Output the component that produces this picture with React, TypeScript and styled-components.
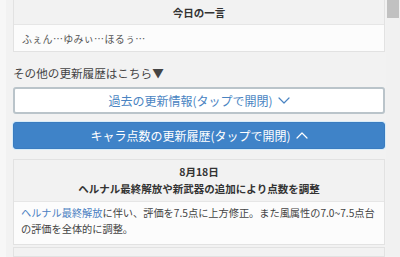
import React from "react";
import styled, { createGlobalStyle } from "styled-components";

const GlobalStyle = createGlobalStyle`
  html, body {
    margin: 0;
    padding: 0;
    overflow: hidden;
    background: #f2f2f2;
  }
  body {
    font-family: "Noto Sans CJK JP", "Noto Sans", sans-serif;
    color: #444;
  }
`;

const Page = styled.div`
  display: flex;
  width: 400px;
  height: 257px;
  overflow: hidden;
  background: #f2f2f2;
  border-left: 6px solid #f7f7f7;
  box-sizing: border-box;
`;

const Main = styled.main`
  flex: 1;
  display: flex;
  flex-direction: column;
  padding: 0 1px 0 7px;
  min-width: 0;
`;

const ScrollTrack = styled.div`
  width: 14px;
  background: #f1f1f1;
  display: flex;
  flex-direction: column;
  align-items: center;
`;

const Thumb = styled.div`
  width: 12px;
  height: 18px;
  background: #c1c1c1;
`;

const Panel = styled.section<{ $open?: boolean }>`
  background: #fcfcfc;
  border: 1px solid #e2e2e2;
  border-top: ${(p) => (p.$open ? "none" : "1px solid #e2e2e2")};
  box-sizing: border-box;
`;

const PanelHeader = styled.div<{ $h: number }>`
  height: ${(p) => p.$h}px;
  background: #f2f2f2;
  border-bottom: 1px solid #e6e6e6;
  display: flex;
  flex-direction: column;
  align-items: center;
  justify-content: center;
  font-weight: bold;
  font-size: 10.5px;
  line-height: 17px;
  color: #333;
  box-sizing: border-box;
`;

const PanelBody = styled.div<{ $h: number }>`
  height: ${(p) => p.$h}px;
  padding: 0 8px;
  display: flex;
  align-items: center;
  font-size: 10px;
  letter-spacing: 0.3px;
  color: #555;
  box-sizing: border-box;
`;

const CardBody = styled.p`
  margin: 0;
  padding: 3px 5px 7px 7px;
  font-size: 10.2px;
  line-height: 16px;
  color: #444;
`;

const Link = styled.span`
  color: #4a80c2;
`;

const Lead = styled.div`
  margin-top: 13px;
  font-size: 11.6px;
  line-height: 16px;
  color: #444;
`;

const Button = styled.div<{ $primary?: boolean }>`
  display: flex;
  align-items: center;
  justify-content: center;
  gap: 5px;
  box-sizing: border-box;
  border-radius: 3px;
  font-size: 12px;
  height: ${(p) => (p.$primary ? 31 : 32)}px;
  margin-top: ${(p) => (p.$primary ? 8 : 6)}px;
  background: ${(p) => (p.$primary ? "#3f83c8" : "#ffffff")};
  color: ${(p) => (p.$primary ? "#ffffff" : "#4a84c2")};
  border: ${(p) => (p.$primary ? "1px solid #3a7cc0" : "2px solid #bac4ca")};
  box-shadow: ${(p) => (p.$primary ? "0 0 0 1px #d8ecf8" : "none")};
`;

const Chevron = ({ up }: { up?: boolean }) => (
  <svg width="12" height="7" viewBox="0 0 12 7" fill="none">
    <path
      d={up ? "M1 6 L6 1 L11 6" : "M1 1 L6 6 L11 1"}
      stroke="currentColor"
      strokeWidth="1.2"
      strokeLinecap="round"
      strokeLinejoin="round"
    />
  </svg>
);

const Card = styled(Panel)`
  margin-top: 10px;
`;

const NextCard = styled.div`
  margin-top: 2px;
  height: 10px;
  background: #f2f2f2;
  border: 1px solid #e2e2e2;
`;

export default function App() {
  return (
    <>
      <GlobalStyle />
      <Page>
        <Main>
          <Panel $open>
            <PanelHeader $h={25}>今日の一言</PanelHeader>
            <PanelBody $h={26}>ふぇん…ゆみぃ…ほるぅ…</PanelBody>
          </Panel>
          <Lead>その他の更新履歴はこちら▼</Lead>
          <Button>
            過去の更新情報(タップで開閉)
            <Chevron />
          </Button>
          <Button $primary>
            キャラ点数の更新履歴(タップで開閉)
            <Chevron up />
          </Button>
          <Card>
            <PanelHeader $h={42}>
              <div>8月18日</div>
              <div>ヘルナル最終解放や新武器の追加により点数を調整</div>
            </PanelHeader>
            <CardBody>
              <Link>ヘルナル最終解放</Link>に伴い、評価を7.5点に上方修正。また風属性の7.0~7.5点台の評価を全体的に調整。
            </CardBody>
          </Card>
          <NextCard />
        </Main>
        <ScrollTrack>
          <Thumb />
        </ScrollTrack>
      </Page>
    </>
  );
}
